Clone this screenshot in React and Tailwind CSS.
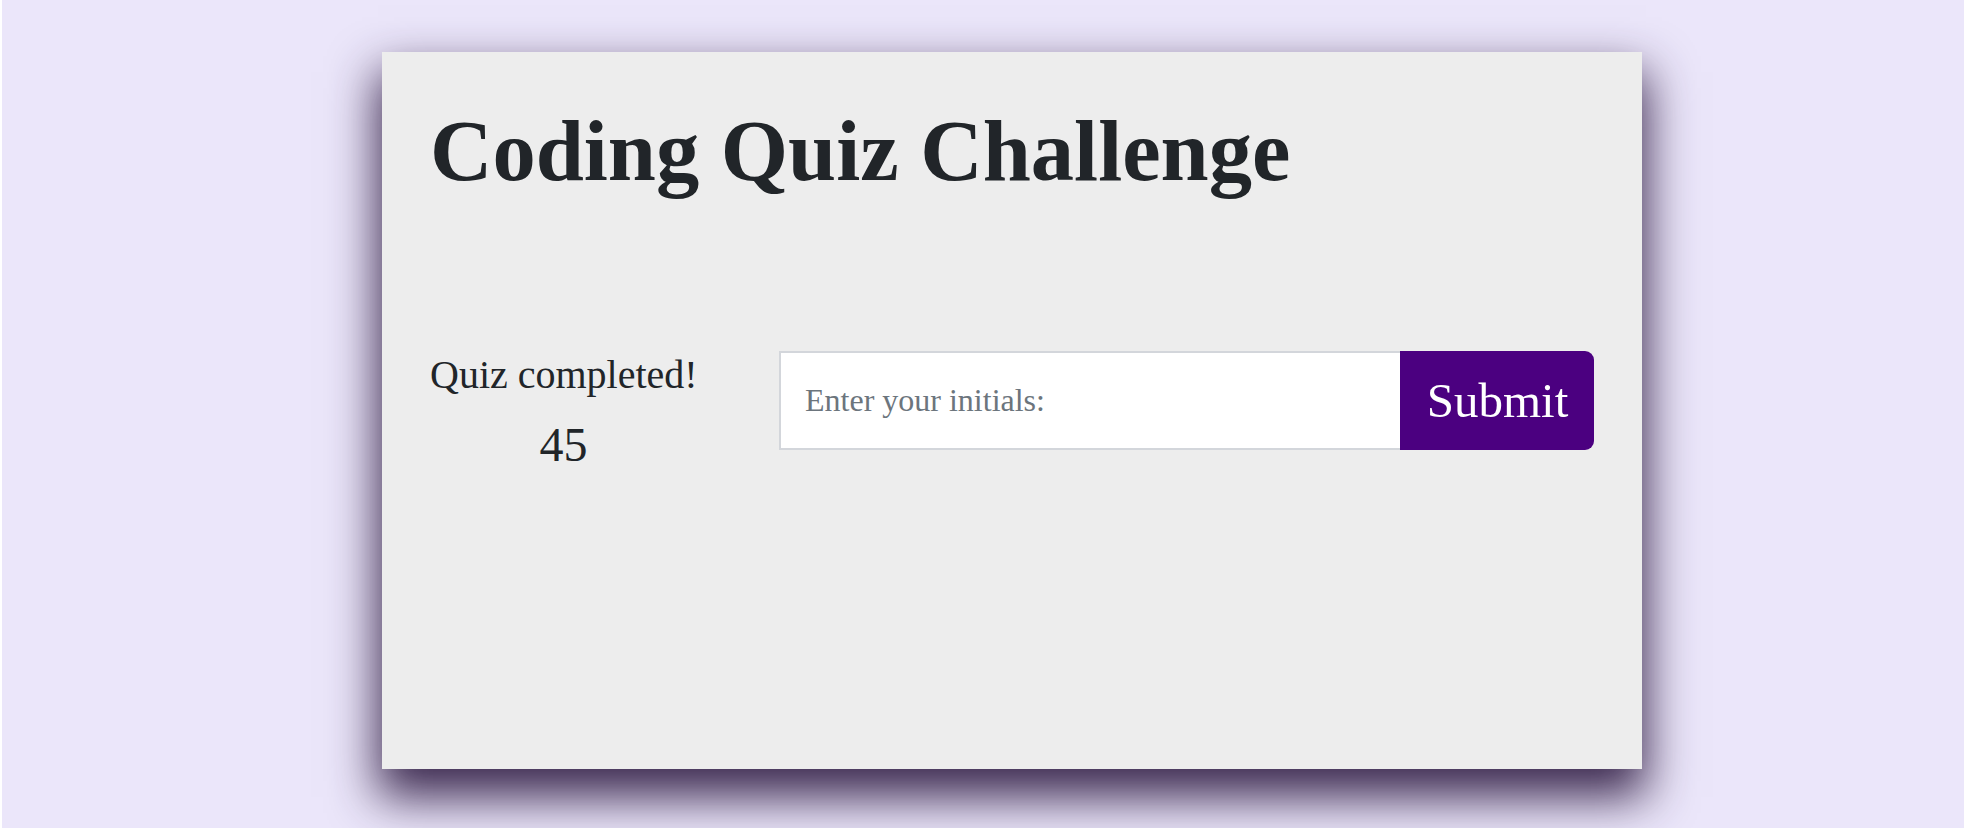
import React from 'react';

const serif = { fontFamily: '"Liberation Serif", "Times New Roman", serif' };

export default function App() {
  return (
    <div className="min-h-[828px] w-full bg-[#ebe6fa] border-l-2 border-white pt-[52px]" style={serif}>
      <div className="ml-[380px] w-[1260px] h-[717px] bg-[#ededed] px-12 pt-12 shadow-[0_24px_45px_4px_rgba(40,20,60,0.9)]">
        <h1 className="text-[86.5px] leading-[1.2] font-bold text-[#212529]">Coding Quiz Challenge</h1>

        <div className="mt-[147px] flex items-start">
          <div className="w-[267px] text-center text-[#212529] whitespace-nowrap">
            <p className="text-[40px] leading-[48px]">Quiz completed!</p>
            <p className="mt-[17px] text-[48px] leading-[58px]">45</p>
          </div>

          <form className="ml-[82px] flex flex-1 h-[99px]" onSubmit={(e) => e.preventDefault()}>
            <input
              type="text"
              placeholder="Enter your initials:"
              className="flex-1 min-w-0 bg-white border-2 border-r-0 border-[#d3d6db] px-[24px] text-[32px] text-[#495057] placeholder:text-[#6c757d] outline-none"
              style={serif}
            />
            <button
              type="submit"
              className="w-[194px] h-full bg-[#4b0080] text-white text-[49px] rounded-r-[9px] pl-[1px]"
              style={serif}
            >
              Submit
            </button>
          </form>
        </div>
      </div>
    </div>
  );
}
